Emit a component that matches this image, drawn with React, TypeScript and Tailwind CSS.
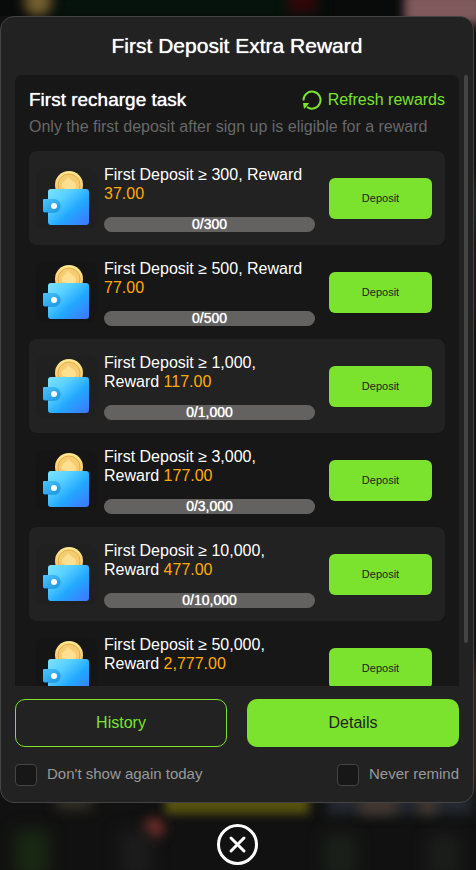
const tasks = [
  { target: "300", reward: "37.00" },
  { target: "500", reward: "77.00" },
  { target: "1,000", reward: "117.00" },
  { target: "3,000", reward: "177.00" },
  { target: "10,000", reward: "477.00" },
  { target: "50,000", reward: "2,777.00" },
];

function WalletIcon({ id }: { id: string }) {
  return (
    <svg viewBox="0 0 61 61" className="w-[61px] h-[61px] shrink-0 rounded-lg bg-black/5" aria-hidden="true">
      <defs>
        <linearGradient id={`body-${id}`} x1="0" y1="0" x2="1" y2="1">
          <stop offset="0" stopColor="#7ee2ff" />
          <stop offset="0.3" stopColor="#58d0ff" />
          <stop offset="0.6" stopColor="#22a8ff" />
          <stop offset="1" stopColor="#3f74ff" />
        </linearGradient>
        <linearGradient id={`clasp-${id}`} x1="0" y1="0" x2="1" y2="1">
          <stop offset="0" stopColor="#4cc6fc" />
          <stop offset="1" stopColor="#1a94e6" />
        </linearGradient>
        <linearGradient id={`coin-${id}`} x1="0" y1="0" x2="0" y2="1">
          <stop offset="0" stopColor="#ffe98f" />
          <stop offset="1" stopColor="#f3bb58" />
        </linearGradient>
      </defs>
      <circle cx="33" cy="17" r="14" fill={`url(#coin-${id})`} />
      <circle cx="33" cy="17" r="11" fill="#f6cc70" stroke="#e3ac50" strokeWidth="1" />
      <path
        d="M32 9c2 3 8 5 8 9 0 3-3 4-6 3l1 3h-7l2-4c-3 1-5-1-4-4 1-3 5-4 6-7z"
        fill="#ffe090"
      />
      <rect x="12" y="21" width="41" height="36" rx="3" fill={`url(#body-${id})`} />
      <path d="M7 32h11a6 6 0 0 1 0 13H8z" fill="#1686d4" opacity="0.6" />
      <path d="M8 31h10a6 6 0 0 1 0 13H8a1 1 0 0 1-1-1V32a1 1 0 0 1 1-1z" fill={`url(#clasp-${id})`} />
      <circle cx="18" cy="38" r="3" fill="#fff" />
    </svg>
  );
}

function Backdrop() {
  return (
    <div className="absolute inset-0 overflow-hidden bg-[#111111]" aria-hidden="true">
      <div className="absolute inset-x-0 top-0 h-4 bg-[#080b0a]" />
      <div className="absolute left-14 right-40 -top-2 h-6 bg-[#05150c] blur-sm" />
      <div className="absolute left-6 -top-3 size-7 rounded-full bg-[#75602f] blur-[6px]" />
      <div className="absolute right-40 -top-2 w-7 h-5 bg-[#35050a] blur-[6px]" />
      <div className="absolute -right-2 -top-2 w-20 h-8 bg-[#80595c] blur-[5px]" />
      <div className="absolute top-[780px] left-[165px] w-36 h-[34px] bg-[#58520f] blur-[5px]" />
      <div className="absolute left-14 top-[790px] w-9 h-5 bg-[#302e25] blur-[6px]" />
      <div className="absolute right-1 top-[790px] w-36 h-6 bg-[#252a30] blur-[6px]" />
      <div className="absolute right-20 top-[790px] w-9 h-6 bg-[#44372f] blur-[6px]" />
      <div className="absolute right-10 top-[790px] w-4 h-6 bg-[#44372f] blur-[6px]" />
      <div className="absolute left-36 bottom-8 size-5 rounded-full bg-[#79302a] blur-[6px]" />
      <div className="absolute left-4 -bottom-2 w-8 h-12 bg-[#1a2812] blur-[8px]" />
      <div className="absolute left-30 -bottom-2 w-8 h-12 bg-[#1c1c1c] blur-[8px]" />
      <div className="absolute right-30 -bottom-2 w-8 h-11 bg-[#1b201a] blur-[8px]" />
      <div className="absolute right-4 -bottom-2 w-8 h-11 bg-[#1b1d1b] blur-[8px]" />
      <div className="absolute -right-1 top-[180px] w-2 h-14 bg-[#344434] blur-sm" />
      <div className="absolute -right-1 top-[240px] w-2 h-20 bg-[#4c1717] blur-sm" />
      <div className="absolute -right-1 top-[660px] w-2 h-32 bg-[#673f12] blur-sm" />
    </div>
  );
}

function TaskRow({ target, reward, striped }: { target: string; reward: string; striped: boolean }) {
  return (
    <li
      className={`flex items-center h-[94px] rounded-lg pl-[7px] pr-[13px] ${striped ? "bg-[#222222]" : ""}`}
    >
      <WalletIcon id={target.replace(",", "")} />
      <div className="flex-1 min-w-0 ml-[7px] mr-3.5">
        <p className="text-base leading-[19px] text-white">
          First Deposit ≥ {target}, Reward <span className="text-[#ffaa09]">{reward}</span>
        </p>
        <div className="mt-3.5 h-[15px] rounded-full bg-[#636261] text-center text-sm leading-[15px] text-white [text-shadow:0_0_1px_#fff]">
          0/{target}
        </div>
      </div>
      <button type="button" className="w-[103px] h-[41px] shrink-0 rounded-md bg-[#7be22d] text-[11px] text-[#222222]">
        Deposit
      </button>
    </li>
  );
}

export default function App() {
  return (
    <div className="relative h-screen bg-[#111111] font-['Liberation_Sans',Arial,sans-serif]">
      <Backdrop />
      <div className="relative flex flex-col h-full pt-4 pr-0.5 pb-[5px]">
        <div
          role="dialog"
          aria-labelledby="reward-title"
          className="flex flex-col flex-1 min-h-0 rounded-[14px] border border-[#444444] bg-[#222222]"
        >
          <h1
            id="reward-title"
            className="h-[58px] shrink-0 text-center text-[21px] leading-[58px] text-white [text-shadow:0_0_1px_#fff]"
          >
            First Deposit Extra Reward
          </h1>

          <div className="flex flex-1 min-h-0 pl-3.5 pr-[5px]">
            <div className="flex-1 overflow-y-auto rounded-t-md [scrollbar-width:none]">
              <section className="rounded-md bg-[#171717] p-3.5">
                <div className="flex items-center justify-between h-[22px]">
                  <h2 className="text-[19px] text-white [text-shadow:0_0_1px_#fff]">First recharge task</h2>
                  <button type="button" className="flex items-center gap-1.5 text-base text-[#7be22d]">
                    <svg viewBox="0 0 20 20" className="size-5" fill="none" aria-hidden="true">
                      <path d="M1.500 10.500A8.500 8.500 0 1 1 5 17" stroke="currentColor" strokeWidth="2" />
                      <path d="M1 13h6l-2 3-3 3z" fill="currentColor" />
                    </svg>
                    Refresh rewards
                  </button>
                </div>
                <p className="h-10 pt-1.5 text-base leading-5 text-[#686868] whitespace-nowrap">
                  Only the first deposit after sign up is eligible for a reward
                </p>
                <ul>
                  {tasks.map((task, i) => (
                    <TaskRow key={task.target} {...task} striped={i % 2 === 0} />
                  ))}
                </ul>
              </section>
            </div>
            <div className="ml-[5px] w-1 h-[93%] rounded-full bg-[#444444]" />
          </div>

          <div className="grid grid-cols-2 gap-5 px-3.5 pt-[13px] text-base">
            <button type="button" className="h-12 rounded-[10px] border border-[#7be22d] text-[#7be22d]">
              History
            </button>
            <button type="button" className="h-12 rounded-[10px] bg-[#7be22d] text-[#222222]">
              Details
            </button>
          </div>

          <div className="flex items-center justify-between h-[55px] px-3.5 text-[15px] text-[#999999]">
            <label className="flex items-center gap-2.5">
              <input
                type="checkbox"
                className="size-[22px] appearance-none rounded border border-[#444444] bg-[#171717] checked:bg-[#7be22d]"
              />
              Don't show again today
            </label>
            <label className="flex items-center gap-2.5">
              <input
                type="checkbox"
                className="size-[22px] appearance-none rounded border border-[#444444] bg-[#171717] checked:bg-[#7be22d]"
              />
              Never remind
            </label>
          </div>
        </div>

        <button type="button" aria-label="Close" className="self-center mt-[21px] text-white">
          <svg viewBox="0 0 41 41" className="size-[41px]" fill="none" stroke="currentColor">
            <circle cx="20.5" cy="20.5" r="19" strokeWidth="3" />
            <path d="M14 14l13 13M27 14L14 27" strokeWidth="3" strokeLinecap="round" />
          </svg>
        </button>
      </div>
    </div>
  );
}
